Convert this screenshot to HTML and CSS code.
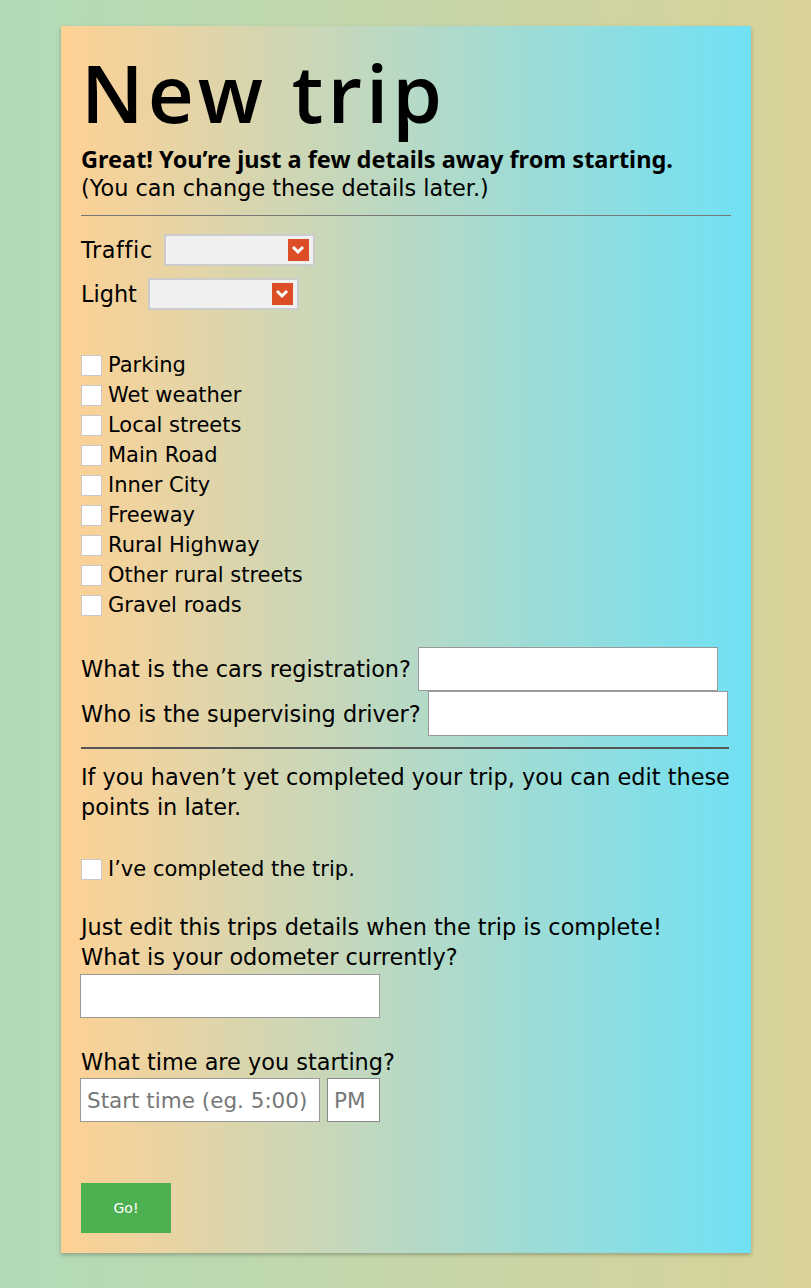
FILE: index.html
```html
<!DOCTYPE html>
<html>
<head>
<meta charset="utf-8">
<link rel="stylesheet" href="styles.css">
</head>
<body>
<div class="card">
  <h1 class="title">New trip</h1>
  <p class="lead"><strong class="lead-bold">Great! You’re just a few details away from starting.</strong><br>(You can change these details later.)</p>
  <hr class="rule">
  <div class="select-row">
    <span class="label traffic">Traffic</span>
    <span class="select"><span class="arrow"><svg width="14" height="10" viewBox="0 0 14 10"><path d="M2 2 L7 7 L12 2" fill="none" stroke="#fff" stroke-width="3"/></svg></span></span>
  </div>
  <div class="select-row">
    <span class="label">Light</span>
    <span class="select"><span class="arrow"><svg width="14" height="10" viewBox="0 0 14 10"><path d="M2 2 L7 7 L12 2" fill="none" stroke="#fff" stroke-width="3"/></svg></span></span>
  </div>
  <div class="checks">
    <label class="check"><span class="box"></span>Parking</label>
    <label class="check"><span class="box"></span>Wet weather</label>
    <label class="check"><span class="box"></span>Local streets</label>
    <label class="check"><span class="box"></span>Main Road</label>
    <label class="check"><span class="box"></span>Inner City</label>
    <label class="check"><span class="box"></span>Freeway</label>
    <label class="check"><span class="box"></span>Rural Highway</label>
    <label class="check"><span class="box"></span>Other rural streets</label>
    <label class="check"><span class="box"></span>Gravel roads</label>
  </div>
  <div class="field-row first"><span class="label">What is the cars registration?</span><span class="input wide"></span></div>
  <div class="field-row"><span class="label">Who is the supervising driver?</span><span class="input wide"></span></div>
  <hr class="rule dark">
  <p class="para">If you haven’t yet completed your trip, you can edit these points in later.</p>
  <label class="check done"><span class="box"></span>I’ve completed the trip.</label>
  <p class="para edit">Just edit this trips details when the trip is complete!<br>What is your odometer currently?</p>
  <span class="input wide odo"></span>
  <p class="para time">What time are you starting?</p>
  <div class="time-row">
    <span class="input start">Start time (eg. 5:00)</span>
    <span class="input pm">PM</span>
  </div>
  <button class="go">Go!</button>
</div>
</body>
</html>
```

FILE: styles.css
```css
html, body {
  margin: 0;
  padding: 0;
}
body {
  background: linear-gradient(to right, #b2dbb9, #d9d299);
  min-height: 1288px;
  font-family: "DejaVu Sans", sans-serif;
  color: #000;
  overflow: hidden;
}
.card {
  width: 650px;
  margin: 26px 0 0 61px;
  padding: 0 20px 20px;
  background: linear-gradient(to right, #ffd194, #70e1f5);
  box-shadow: 0 2px 4px rgba(0,0,0,0.25);
}
.title {
  margin: 0;
  padding-top: 13px;
  font-family: "Open Sans", sans-serif;
  font-weight: 600;
  font-size: 80px;
  line-height: 106px;
  letter-spacing: 4px;
}
.lead {
  margin: 0;
  font-size: 22.4px;
  line-height: 28px;
}
.lead-bold {
  font-family: "Noto Sans", sans-serif;
  font-size: 23.5px;
}
.rule {
  margin: 13px 0 0;
  border: 0;
  border-top: 1px solid #777;
}
.rule.dark {
  margin-top: 11px;
  border-top: 2px solid #555;
  width: 648px;
}
.select-row {
  display: flex;
  align-items: center;
  gap: 11px;
  height: 32px;
  margin-top: 18px;
  font-size: 22.4px;
}
.select-row + .select-row {
  margin-top: 12px;
}
.label.traffic {
  letter-spacing: 0.6px;
}
.select {
  width: 143px;
  height: 28px;
  background: #f0f0f0;
  border: 2px solid #ccc;
  display: flex;
  align-items: center;
  justify-content: flex-end;
  padding-right: 4px;
  box-sizing: content-box;
}
.arrow {
  width: 21px;
  height: 22px;
  background: #dc4f26;
  display: flex;
  align-items: center;
  justify-content: center;
}
.checks {
  margin-top: 40px;
}
.check {
  display: flex;
  align-items: center;
  height: 30px;
  font-size: 21px;
}
.box {
  width: 19px;
  height: 19px;
  background: #fff;
  border: 1px solid #c8c8c8;
  margin-right: 6px;
  flex: none;
}
.field-row {
  display: flex;
  align-items: center;
  gap: 7px;
  font-size: 22.4px;
}
.field-row.first {
  margin-top: 27px;
}
.input {
  display: flex;
  align-items: center;
  background: #fff;
  border: 1px solid #999;
  box-sizing: border-box;
  height: 44px;
  font-size: 21.5px;
  color: #777;
  padding: 0 7px;
  white-space: nowrap;
  overflow: hidden;
}
.input.wide {
  width: 300px;
}
.field-row + .field-row .input {
  height: 45px;
}
.para {
  margin: 0;
  font-size: 22.4px;
  line-height: 30px;
}
.rule.dark + .para {
  margin-top: 13px;
}
.check.done {
  margin-top: 32px;
}
.para.edit {
  margin-top: 28px;
}
.odo {
  margin-top: 2px;
  margin-left: -1px;
}
.para.time {
  margin-top: 29px;
}
.time-row {
  display: flex;
  gap: 7px;
  margin-left: -1px;
  margin-top: 1px;
}
.input.start {
  width: 240px;
  padding: 0 6px;
}
.input.pm {
  width: 53px;
  border-color: #888;
  padding: 0 6px;
}
.go {
  display: block;
  margin-top: 61px;
  width: 90px;
  height: 50px;
  border: 0;
  background: #4caf50;
  color: #fff;
  font-family: "DejaVu Sans", sans-serif;
  font-size: 14px;
  padding: 0;
}
```
